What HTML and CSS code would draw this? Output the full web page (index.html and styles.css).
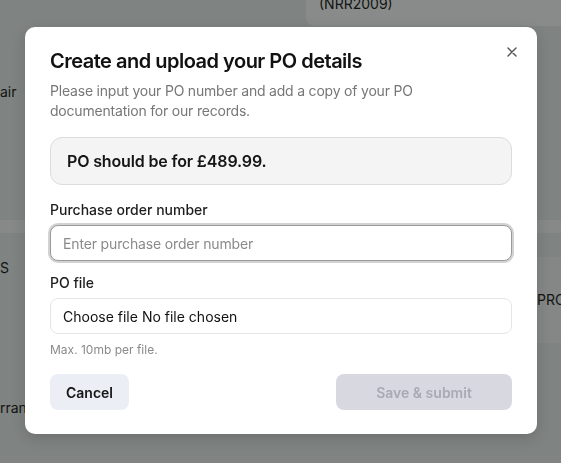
FILE: index.html
```html
<!DOCTYPE html>
<html lang="en">
<head>
    <meta charset="UTF-8">
    <meta name="viewport" content="width=device-width, initial-scale=1.0">
    <title>Create and upload your PO details</title>
    <link rel="stylesheet" href="styles.css">
</head>
<body>
    <!-- Page behind the dialog -->
    <div class="page">
        <div class="page-top">
            <div class="ref-card">(NRR2009)</div>
        </div>
        <div class="page-row row-air">air</div>
        <div class="page-band"></div>
        <div class="page-section">
            <div class="page-left">S</div>
            <div class="page-right">PRC</div>
        </div>
        <div class="page-row row-rran">rran</div>
    </div>

    <!-- Dialog -->
    <div class="overlay">
        <div class="modal" role="dialog" aria-labelledby="modalTitle">
            <button class="close-btn" aria-label="Close">
                <svg width="10" height="10" viewBox="0 0 10 10">
                    <path d="M1 1L9 9M9 1L1 9" stroke="#555" stroke-width="1.4" stroke-linecap="round"/>
                </svg>
            </button>

            <h2 id="modalTitle" class="modal-title">Create and upload your PO details</h2>
            <p class="modal-desc">Please input your PO number and add a copy of your PO documentation for our records.</p>

            <div class="amount-box">PO should be for £489.99.</div>

            <div class="field">
                <label for="poNumber" class="field-label">Purchase order number</label>
                <input type="text" id="poNumber" class="text-input" placeholder="Enter purchase order number" autofocus>
            </div>

            <div class="field field-file">
                <span class="field-label">PO file</span>
                <label class="file-box">
                    <input type="file" class="file-input">
                    <span class="file-btn">Choose file</span>
                    <span class="file-name">No file chosen</span>
                </label>
                <p class="hint">Max. 10mb per file.</p>
            </div>

            <div class="actions">
                <button class="btn btn-cancel">Cancel</button>
                <button class="btn btn-submit" disabled>Save &amp; submit</button>
            </div>
        </div>
    </div>
</body>
</html>
```

FILE: styles.css
```css
* {
    box-sizing: border-box;
}

body {
    margin: 0;
    font-family: Inter, "Liberation Sans", Arial, sans-serif;
    background-color: #edeeee;
    color: #111;
}

/* Page behind the overlay */
.page {
    height: 463px;
    overflow: hidden;
    font-size: 14px;
}

.page-top {
    display: flex;
    justify-content: flex-end;
    height: 26px;
}

.ref-card {
    width: 255px;
    background: #fff;
    border-radius: 0 0 0 9px;
    padding-left: 13px;
    line-height: 14px;
    margin-top: -3px;
}

.page-row {
    line-height: 20px;
}

.row-air {
    margin-top: 56px;
}

.page-band {
    margin-top: 118px;
    height: 13px;
    background: #fbfbfb;
}

.page-section {
    display: flex;
    justify-content: space-between;
    align-items: flex-start;
    height: 110px;
}

.page-left {
    margin-top: 25px;
    line-height: 20px;
}

.page-right {
    margin-top: 24px;
    width: 24px;
    height: 86px;
    background: #f6f6f6;
    padding-top: 33px;
    line-height: 20px;
    overflow: hidden;
    white-space: nowrap;
}

.row-rran {
    margin-top: 55px;
}

/* Dialog */
.overlay {
    position: fixed;
    inset: 0;
    background: rgba(17, 24, 20, 0.5);
    display: flex;
    justify-content: center;
    align-items: center;
}

.modal {
    position: relative;
    width: 512px;
    background: #fff;
    border-radius: 10px;
    padding: 20px 25px 24px;
    box-shadow: 0 4px 14px rgba(0, 0, 0, 0.15);
    margin: 0 0 2px 1px;
}

.close-btn {
    position: absolute;
    top: 15px;
    right: 15px;
    width: 20px;
    height: 20px;
    padding: 0;
    border: none;
    background: none;
    display: flex;
    align-items: center;
    justify-content: center;
    cursor: pointer;
}

.modal-title {
    margin: 0 0 6px;
    font-size: 20px;
    line-height: 28px;
    font-weight: 600;
    letter-spacing: -0.5px;
    color: #111;
}

.modal-desc {
    margin: 0 0 16px;
    font-size: 14px;
    line-height: 20px;
    letter-spacing: -0.2px;
    color: #777;
}

.amount-box {
    background: #f4f4f4;
    border: 1px solid #dcdcdc;
    border-radius: 12px;
    padding: 11px 16px;
    font-size: 16px;
    line-height: 24px;
    font-weight: 600;
    letter-spacing: -0.15px;
    color: #151515;
    margin-bottom: 15px;
}

.field {
    display: flex;
    flex-direction: column;
}

.field-file {
    margin-top: 12px;
}

.field-label {
    font-size: 14px;
    line-height: 20px;
    font-weight: 500;
    color: #1d1d1d;
    margin-bottom: 5px;
}

.text-input {
    height: 36px;
    padding: 0 12px;
    border: 1px solid #9a9a9a;
    border-radius: 8px;
    box-shadow: 0 0 0 2px #d2d2d2;
    font-family: inherit;
    font-size: 14px;
    letter-spacing: -0.15px;
    color: #111;
    outline: none;
}

.text-input::placeholder {
    color: #8a8a8a;
}

.file-box {
    display: flex;
    align-items: center;
    gap: 4px;
    height: 36px;
    padding: 0 12px;
    border: 1px solid #e6e6e6;
    border-radius: 8px;
    font-size: 14px;
    color: #111;
    cursor: pointer;
}

.file-input {
    display: none;
}

.hint {
    margin: 8px 0 0;
    font-size: 12px;
    line-height: 16px;
    color: #8a8a8a;
}

.actions {
    display: flex;
    justify-content: space-between;
    margin-top: 16px;
}

.btn {
    height: 36px;
    border: none;
    border-radius: 8px;
    font-family: inherit;
    font-size: 14px;
    font-weight: 600;
    cursor: pointer;
}

.btn-cancel {
    padding: 0 16px;
    background: #eceef6;
    color: #151515;
}

.btn-submit {
    width: 176px;
    background: #d8d9e0;
    color: #a8a9b4;
    cursor: default;
}
```
